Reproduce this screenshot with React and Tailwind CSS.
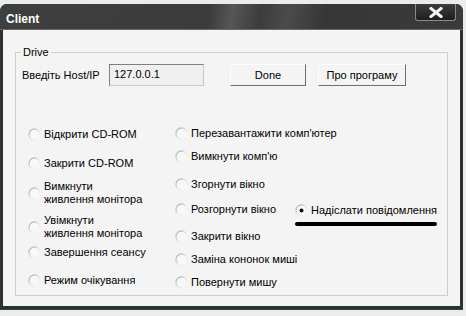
import React from 'react';

function Radio({ checked }) {
  return (
    <svg width="13" height="13" viewBox="0 0 13 13" className="shrink-0">
      <defs>
        <linearGradient id={checked ? 'rg1' : 'rg0'} x1="0" y1="0" x2="1" y2="1">
          <stop offset="0" stopColor="#a8a8a8" />
          <stop offset="0.5" stopColor="#e2e2e2" />
          <stop offset="1" stopColor="#ffffff" />
        </linearGradient>
      </defs>
      <circle cx="6.5" cy="6.5" r="5.5" fill="#f8f8f8" stroke={`url(#${checked ? 'rg1' : 'rg0'})`} strokeWidth="1.3" />
      {checked && <circle cx="6.5" cy="6.5" r="2" fill="#111" />}
    </svg>
  );
}

function Option({ label, checked, mt, lines }) {
  return (
    <div className={`flex items-center gap-[3px] ${mt}`}>
      <Radio checked={checked} />
      <span className="leading-[13px] whitespace-nowrap">
        {lines ? lines.map((l) => <div key={l}>{l}</div>) : label}
      </span>
    </div>
  );
}

export default function App() {
  return (
    <div className="w-[466px] h-[316px] bg-[#ececec] pt-[4px] text-[11px] text-black" style={{ fontFamily: '"Liberation Sans", Arial, sans-serif' }}>
      <div className="w-[463px] h-[306px] rounded-t-[7px] bg-[#2f3030] flex flex-col border-b-[1px] border-[#1f4a44]">
        {/* Title bar */}
        <div className="h-[26px] flex items-start justify-between rounded-t-[7px] bg-[linear-gradient(100deg,#3e3f3f_0%,#3a3b3b_45%,#555656_50%,#3b3c3c_56%,#4a4b4b_62%,#353636_70%,#3a3b3b_100%)] border-b border-[#6a6a6a]">
          <span className="pl-[6px] pt-[9px] text-[12px] font-bold text-white leading-[13px]">Client</span>
          <div className="mr-[7px] w-[41px] h-[17px] rounded-b-[3px] border border-t-0 border-[#8a8a8a] bg-[linear-gradient(#3c3c3c,#1e1e1e)] flex items-center justify-center">
            <svg width="14" height="11" viewBox="0 0 14 11">
              <path d="M2 1.5 L12 9.5 M12 1.5 L2 9.5" stroke="#f2f2f2" strokeWidth="3" strokeLinecap="square" />
            </svg>
          </div>
        </div>
        {/* Client area */}
        <div className="mx-[3px] mb-[3px] flex-1 bg-[#f4f4f4] px-[12px] pt-[16px]">
          <fieldset className="h-[250px] border border-[#cdcdcd] p-0 m-0">
            <legend className="ml-[5px] px-[2px] leading-[13px]">Drive</legend>
            <div className="flex items-center mt-[5px] pl-[6px]">
              <span className="w-[87px]">Введіть Host/IP</span>
              <div className="w-[95px] h-[22px] border border-t-[#7f7f7f] border-l-[#7f7f7f] border-r-[#c9c9c9] border-b-[#c9c9c9] bg-[#f0f0f0] pl-[4px] pt-[3px] leading-[13px]">127.0.0.1</div>
              <button className="ml-[26px] w-[76px] h-[22px] bg-[#f4f4f4] border border-t-white border-l-white border-r-[#6e6e6e] border-b-[#6e6e6e] leading-[13px]">Done</button>
              <button className="ml-[12px] w-[88px] h-[22px] bg-[#f4f4f4] border border-t-white border-l-white border-r-[#6e6e6e] border-b-[#6e6e6e] leading-[13px]">Про програму</button>
            </div>
            <div className="flex mt-[40px] pl-[12px]">
              <div className="w-[147px] flex flex-col">
                <Option label="Відкрити CD-ROM" mt="mt-[2px]" />
                <Option label="Закрити CD-ROM" mt="mt-[16px]" />
                <Option lines={['Вимкнути', 'живлення монітора']} mt="mt-[10px]" />
                <Option lines={['Увімкнути', 'живлення монітора']} mt="mt-[8px]" />
                <Option label="Завершення сеансу" mt="mt-[6px]" />
                <Option label="Режим очікування" mt="mt-[15px]" />
              </div>
              <div className="w-[120px] flex flex-col">
                <Option label="Перезавантажити комп'ютер" mt="mt-[1px]" />
                <Option label="Вимкнути комп'ю" mt="mt-[10px]" />
                <Option label="Згорнути вікно" mt="mt-[15px]" />
                <Option label="Розгорнути вікно" mt="mt-[12px]" />
                <Option label="Закрити вікно" mt="mt-[14px]" />
                <Option label="Заміна кононок миші" mt="mt-[10px]" />
                <Option label="Повернути мишу" mt="mt-[10px]" />
              </div>
              <div className="flex flex-col">
                <Option label="Надіслати повідомлення" checked mt="mt-[78px]" />
                <div className="mt-[5px] w-[142px] h-[4px] rounded-full bg-black" />
              </div>
            </div>
          </fieldset>
        </div>
      </div>
    </div>
  );
}
